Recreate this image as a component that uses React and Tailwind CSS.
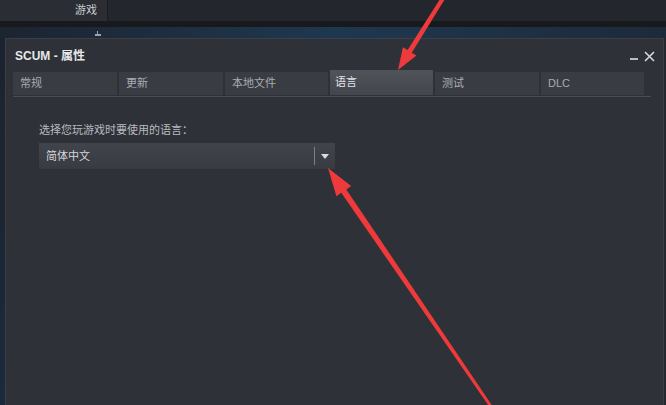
import React from "react";

const tabs = [
  ["常规", "w-[104px]"],
  ["更新", "w-[104px]"],
  ["本地文件", "w-[103px]"],
  ["语言", "w-[103px]"],
  ["测试", "w-[104px]"],
  ["DLC", "w-[103px]"],
];

export default function App() {
  return (
    <div
      className="relative w-[666px] h-[405px] overflow-hidden bg-[#1d2129] flex flex-col"
      style={{ fontFamily: '"Liberation Sans", "Noto Sans CJK SC", sans-serif' }}
    >
      {/* top library bar */}
      <div className="h-[21px] flex shrink-0">
        <div className="w-[108px] bg-[#2a2d33] border-r border-[#1a1c20] flex items-center justify-end pr-[10px] text-[11px] text-[#c9ccd1]">
          游戏
        </div>
        <div className="flex-1 bg-[#23262c]" />
      </div>
      <div className="h-[6px] shrink-0 bg-[#17191d]" />
      <div className="h-[11px] shrink-0 bg-gradient-to-r from-[#1c2430] via-[#1e3850] to-[#1d2a3a] flex">
        <div className="w-[95px]" />
        <div className="relative w-[6px] h-[11px]">
          <div className="absolute left-0 top-[7px] w-[6px] h-[2px] bg-[#9aa3ad]" />
          <div className="absolute left-[2px] top-[4px] w-[1px] h-[4px] bg-[#9aa3ad]" />
        </div>
      </div>

      {/* dialog */}
      <div className="flex-1 flex">
        <div className="w-[5px] bg-gradient-to-b from-[#1b2330] via-[#1c2633] to-[#1a2a3c]" />
        <div className="flex-1 bg-[#2e3137] border-l border-t border-r border-[#3b3e45] flex flex-col">
          <div className="h-[30px] flex items-center justify-between pl-[9px] pr-[8px] pt-[4px]">
            <span className="text-[12px] text-[#e6e8eb] font-bold">SCUM - 属性</span>
            <div className="flex items-end gap-[6px] text-[#c8cbd0]">
              <span className="w-[8px] h-[2px] bg-[#b8bbc0] mb-[2px]" />
              <svg width="11" height="11" viewBox="0 0 11 11">
                <path d="M1 1 L10 10 M10 1 L1 10" stroke="#d6d8dc" strokeWidth="1.6" />
              </svg>
            </div>
          </div>
          <div className="ml-[7px] mr-[12px] mt-[1px] flex gap-[2px] items-end border-b border-[#4a4d54] pb-[1px]">
            {tabs.map(([t, w], i) =>
              i === 3 ? (
                <div
                  key={t}
                  className={`${w} h-[25px] bg-gradient-to-b from-[#50535a] to-[#43464d] text-[11px] text-[#e2e4e7] flex items-center pl-[5px]`}
                >
                  {t}
                </div>
              ) : (
                <div
                  key={t}
                  className={`${w} h-[23px] bg-[#393c42] text-[11px] text-[#a9adb3] flex items-center pl-[7px]`}
                >
                  {t}
                </div>
              )
            )}
          </div>
          <div className="pl-[33px] pt-[26px] flex flex-col">
            <div className="text-[11px] text-[#b7bbc1] leading-[14px]">选择您玩游戏时要使用的语言：</div>
            <div className="mt-[6px] w-[296px] h-[26px] bg-gradient-to-b from-[#41444b] to-[#383b41] flex items-center">
              <span className="flex-1 pl-[7px] text-[11px] text-[#d3d6da]">简体中文</span>
              <div className="w-[1px] h-[18px] bg-[#7d8087]" />
              <div className="w-[20px] flex items-center justify-center">
                <svg width="8" height="5" viewBox="0 0 8 5">
                  <path d="M0 0 L8 0 L4 5 Z" fill="#d9dbdf" />
                </svg>
              </div>
            </div>
          </div>
        </div>
        <div className="w-[2px] bg-[#24272d]" />
      </div>

      {/* red annotation arrows */}
      <svg className="absolute inset-0 pointer-events-none" width="666" height="405" viewBox="0 0 666 405">
        <polygon
          points="398,70 416.5,55.6 411.8,52.7 446.7,-3.9 443.3,-6.1 407.6,50.1 402.9,47.2"
          fill="#ee3a3a"
        />
        <polygon
          points="328,168 351.2,186 346.3,189.4 493.2,407.2 490.8,408.8 341.3,192.8 336.4,196.2"
          fill="#ee3a3a"
        />
      </svg>
    </div>
  );
}
